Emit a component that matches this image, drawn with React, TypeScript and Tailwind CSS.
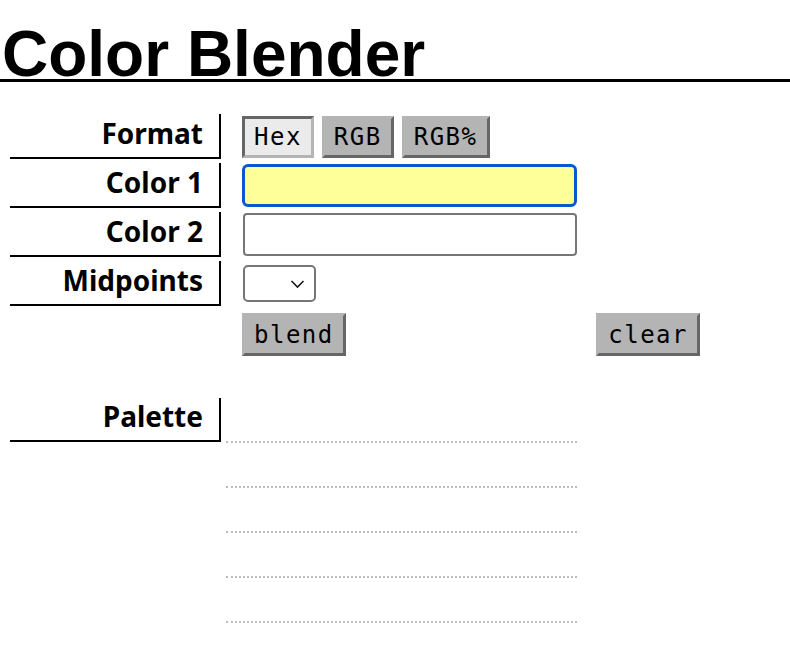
import React from "react";

const mono = { fontFamily: '"DejaVu Sans Mono", "Liberation Mono", monospace' };

const Label = ({ text }: { text: string }) => (
  <div className="flex h-full w-[211px] shrink-0 items-end justify-end border-r-2 border-b-2 border-black pr-4 pb-[3px] text-[28px] font-bold leading-normal text-black">
    {text}
  </div>
);

const btnUp =
  "border-[3px] border-[#b4b4b4] border-r-[#666] border-b-[#666] bg-[#b4b4b4] px-[9px] text-[24px] leading-none tracking-[1.5px] text-black";
const btnDown =
  "border-[3px] border-[#666] border-r-[#b4b4b4] border-b-[#b4b4b4] bg-[#ebebeb] px-[9px] text-[24px] leading-none tracking-[1.5px] text-black";

const App = () => {
  const formats = ["Hex", "RGB", "RGB%"];
  const selected = "Hex";

  return (
    <div className="min-h-[654px] bg-white" style={{ fontFamily: '"Noto Sans", "Open Sans", sans-serif' }}>
      {/* title */}
      <h1
        className="mt-[30px] border-b-[3px] border-black pl-[2px] text-[64px] font-bold leading-[49px] text-black"
        style={{ fontFamily: '"Liberation Sans", Arial, sans-serif' }}
      >
        Color Blender
      </h1>

      <div className="mt-8 flex flex-col gap-1 pl-[10px]">
        {/* Format */}
        <div className="flex h-[45px] items-center">
          <Label text="Format" />
          <div className="ml-[21px] flex gap-2">
            {formats.map((f) => (
              <button key={f} className={`h-[42px] ${f === selected ? btnDown : btnUp}`} style={mono}>
                {f}
              </button>
            ))}
          </div>
        </div>

        {/* Color 1 */}
        <div className="flex h-[45px] items-center">
          <Label text="Color 1" />
          <input
            type="text"
            className="ml-[21px] h-[43px] w-[335px] rounded-[6px] border-[3px] border-[#0b57d0] bg-[#ffff99] px-2 outline-none"
          />
        </div>

        {/* Color 2 */}
        <div className="flex h-[45px] items-center">
          <Label text="Color 2" />
          <input
            type="text"
            className="ml-[22px] h-[43px] w-[334px] rounded-[4px] border-2 border-[#767676] bg-white px-2 outline-none"
          />
        </div>

        {/* Midpoints */}
        <div className="flex h-[45px] items-center">
          <Label text="Midpoints" />
          <div className="relative ml-[22px]">
            <select className="block h-[37px] w-[73px] appearance-none rounded-[5px] border-2 border-[#767676] bg-white outline-none" />
            <svg
              className="pointer-events-none absolute right-[11px] top-1/2 -translate-y-1/2"
              width="15"
              height="9"
              viewBox="0 0 15 9"
              fill="none"
            >
              <path d="M1.5 1.5l6 6 6-6" stroke="#1a1a1a" strokeWidth="1.6" />
            </svg>
          </div>
        </div>

        {/* actions */}
        <div className="flex h-[49px] items-center">
          <div className="w-[211px] shrink-0" />
          <div className="ml-[21px] flex w-[458px] justify-between">
            <button className={`h-[43px] ${btnUp}`} style={mono}>
              blend
            </button>
            <button className={`h-[43px] ${btnUp}`} style={mono}>
              clear
            </button>
          </div>
        </div>

        {/* Palette */}
        <div className="mt-[35px] flex items-start">
          <div className="h-[44px]">
            <Label text="Palette" />
          </div>
          <div className="ml-[5px] flex w-[351px] flex-col">
            {[0, 1, 2, 3, 4].map((i) => (
              <div key={i} className="h-[45px] border-b-2 border-dotted border-[#bdbdbd]" />
            ))}
          </div>
        </div>
      </div>
    </div>
  );
};

export default App;
